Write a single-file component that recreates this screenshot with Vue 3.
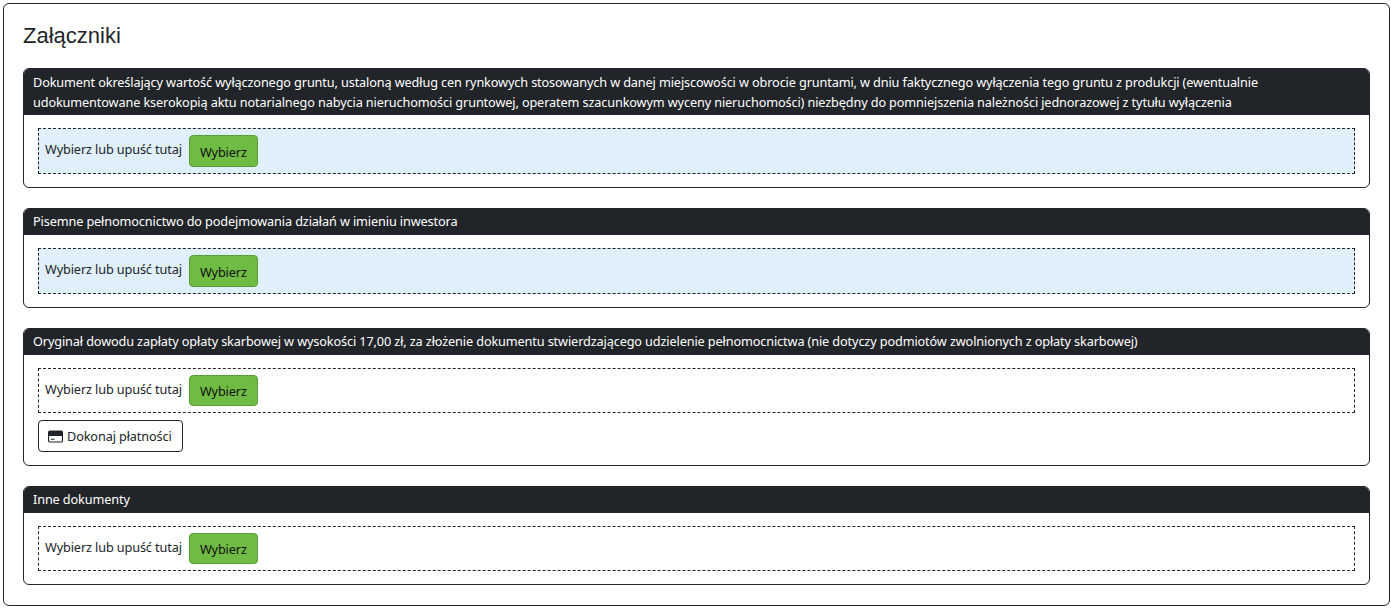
<script setup>
const cards = [
  { title: 'Dokument określający wartość wyłączonego gruntu, ustaloną według cen rynkowych stosowanych w danej miejscowości w obrocie gruntami, w dniu faktycznego wyłączenia tego gruntu z produkcji (ewentualnie udokumentowane kserokopią aktu notarialnego nabycia nieruchomości gruntowej, operatem szacunkowym wyceny nieruchomości) niezbędny do pomniejszenia należności jednorazowej z tytułu wyłączenia', tinted: true, wrapped: true },
  { title: 'Pisemne pełnomocnictwo do podejmowania działań w imieniu inwestora', tinted: true },
  { title: 'Oryginał dowodu zapłaty opłaty skarbowej w wysokości 17,00 zł, za złożenie dokumentu stwierdzającego udzielenie pełnomocnictwa (nie dotyczy podmiotów zwolnionych z opłaty skarbowej)', pay: true },
  { title: 'Inne dokumenty' },
]
</script>

<template>
  <main class="page">
    <section class="outer">
      <h1 class="heading">Załączniki</h1>
      <div class="stack">
        <article v-for="card in cards" :key="card.title" class="card">
          <header class="card-head" :class="{ wrapped: card.wrapped }">{{ card.title }}</header>
          <div class="card-body">
            <div class="drop" :class="{ tinted: card.tinted }">
              <span class="hint">Wybierz lub upuść tutaj</span>
              <button type="button" class="pick">Wybierz</button>
            </div>
            <button v-if="card.pay" type="button" class="pay">
              <svg class="pay-icon" viewBox="0 0 16 16" width="15" height="15" aria-hidden="true">
                <path fill="#212529" d="M0 3.5a2 2 0 0 1 2-2h12a2 2 0 0 1 2 2v9a2 2 0 0 1-2 2H2a2 2 0 0 1-2-2v-9zm1.2 4v5a.8.8 0 0 0 .8.8h12a.8.8 0 0 0 .8-.8v-5H1.2zM3 10.5h4v1H3v-1z"/>
              </svg>
              Dokonaj płatności
            </button>
          </div>
        </article>
      </div>
    </section>
  </main>
</template>

<style>
html, body { margin: 0; background: #fff; }
</style>

<style scoped>
.page {
  padding: 3px 1px 2px 3px;
  font-family: "Noto Sans", "Open Sans", sans-serif;
  font-size: 12.7px;
  letter-spacing: -0.12px;
  line-height: 20px;
  color: #212529;
}
.outer {
  box-sizing: border-box;
  height: 603px;
  padding: 19px;
  border: 1px solid #212529;
  border-radius: 6px;
}
.heading {
  margin: 0 0 19px;
  font-family: "Liberation Sans", Arial, sans-serif;
  font-size: 22px;
  font-weight: 400;
  letter-spacing: 0;
  line-height: 26px;
}
.stack { display: flex; flex-direction: column; gap: 20px; }
.card {
  border: 1px solid #212529;
  border-radius: 6px;
  overflow: hidden;
}
.card-head {
  padding: 2px 9px 4px;
  background: #212529;
  color: #fff;
}
.card-head.wrapped { padding: 3px 9px; }
.card-body { padding: 13px 14px; }
.drop {
  display: flex;
  align-items: flex-start;
  gap: 7px;
  padding: 6px;
  border: 1px dashed #212529;
}
.drop.tinted { background: #dff0fa; }
.hint { margin-top: 4px; }
.pick, .pay {
  font: inherit;
  letter-spacing: inherit;
  color: #212529;
  border-radius: 4px;
  cursor: pointer;
}
.pick {
  width: 69px;
  height: 31px;
  padding: 0;
  background: #6fbb44;
  border: 1px solid #5a9e35;
  color: #111;
}
.drop.tinted .pick { height: 32px; padding-top: 2px; }
.pay {
  display: flex;
  align-items: center;
  gap: 4px;
  height: 32px;
  margin-top: 7px;
  padding: 0 10px 0 9px;
  background: #fff;
  border: 1px solid #212529;
}
.pay-icon { flex: none; }
</style>
